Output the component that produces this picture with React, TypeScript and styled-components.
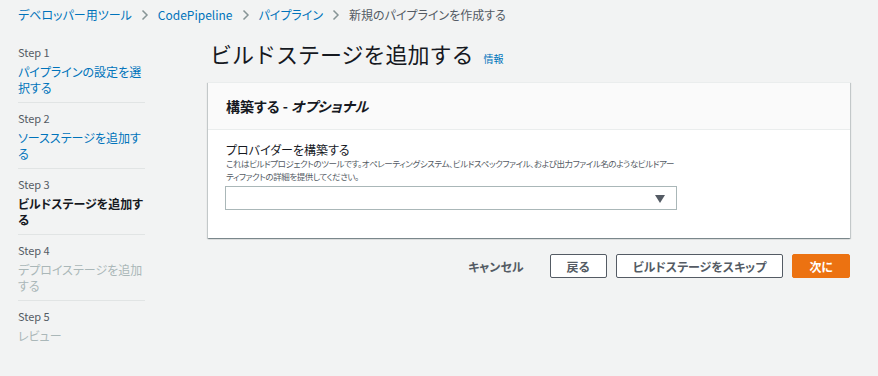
import { FC } from "react";
import styled, { createGlobalStyle } from "styled-components";

const GlobalStyle = createGlobalStyle`
  html, body {
    margin: 0;
    padding: 0;
    background: #f2f3f3;
  }
  body {
    font-family: "Noto Sans CJK JP", "Noto Sans", sans-serif;
    font-feature-settings: "palt";
    color: #16191f;
  }
`;

const Page = styled.div`
  width: 878px;
  height: 376px;
  padding: 6px 18px 0 18px;
  box-sizing: border-box;
  overflow: hidden;
`;

const Breadcrumbs = styled.nav`
  display: flex;
  align-items: center;
  gap: 9px;
  height: 18px;
  font-size: 12px;
  line-height: 18px;
`;

const Crumb = styled.span<{ $current?: boolean }>`
  color: ${(p) => (p.$current ? "#545b64" : "#0073bb")};
`;

const Sep = styled.span`
  display: flex;
  align-items: center;
`;

const Layout = styled.div`
  display: grid;
  grid-template-columns: 127px 1fr;
  column-gap: 63px;
  margin-top: 20px;
`;

const StepList = styled.ol`
  list-style: none;
  margin: 0;
  padding: 0;
`;

const StepItem = styled.li`
  padding: 7px 0 6px;
  border-bottom: 1px solid #e1e4e4;
  &:first-child {
    padding-top: 0;
  }
  &:last-child {
    border-bottom: none;
  }
`;

const StepLabel = styled.div`
  font-size: 11px;
  line-height: 16px;
  color: #545b64;
  margin-bottom: 4px;
`;

const StepName = styled.div<{ $state: "done" | "active" | "todo" }>`
  font-size: 12px;
  line-height: 16px;
  color: ${(p) =>
    p.$state === "done" ? "#0073bb" : p.$state === "active" ? "#16191f" : "#aab7b8"};
  font-weight: ${(p) => (p.$state === "active" ? 700 : 400)};
`;

const Main = styled.main`
  display: flex;
  flex-direction: column;
`;

const TitleRow = styled.div`
  display: flex;
  align-items: baseline;
  gap: 10px;
  margin-top: -6px;
  padding-left: 2px;
  margin-bottom: 14px;
`;

const Title = styled.h1`
  margin: 0;
  font-size: 22px;
  font-weight: 400;
  line-height: 30px;
  font-feature-settings: normal;
  color: #16191f;
`;

const InfoLink = styled.a`
  font-size: 10px;
  color: #0073bb;
  font-weight: 400;
  text-decoration: none;
`;

const Card = styled.section`
  background: #ffffff;
  box-shadow: 0 1px 1px 0 rgba(0, 28, 36, 0.3), 1px 1px 1px 0 rgba(0, 28, 36, 0.15),
    -1px 1px 1px 0 rgba(0, 28, 36, 0.15);
  border-top: 1px solid #eaeded;
  width: 642px;
`;

const CardHeader = styled.header`
  background: #fafafa;
  border-bottom: 1px solid #eaeded;
  height: 46px;
  display: flex;
  align-items: center;
  padding: 0 18px;
`;

const CardTitle = styled.h2`
  margin: 0;
  font-size: 14px;
  font-weight: 700;
  color: #16191f;
  em {
    font-style: italic;
  }
`;

const CardBody = styled.div`
  padding: 12px 17px 28px;
`;

const FieldLabel = styled.label`
  display: block;
  font-size: 12px;
  line-height: 15px;
  color: #16191f;
  padding-left: 1px;
`;

const FieldHint = styled.p`
  margin: 0 0 3px;
  padding-left: 1px;
  font-size: 8.5px;
  line-height: 13px;
  letter-spacing: -0.42px;
  color: #545b64;
  width: 453px;
`;

const Select = styled.div`
  position: relative;
  width: 452px;
  height: 24px;
  border: 1px solid #aab7b8;
  box-sizing: border-box;
  background: #fff;
`;

const Caret = styled.svg`
  position: absolute;
  right: 11px;
  top: 8px;
`;

const Actions = styled.div`
  display: flex;
  justify-content: flex-end;
  align-items: center;
  gap: 9px;
  width: 642px;
  margin-top: 16px;
`;

const Button = styled.button<{ $variant?: "link" | "normal" | "primary" }>`
  font-family: inherit;
  font-feature-settings: "palt";
  font-size: 12px;
  font-weight: 700;
  height: 24px;
  padding: 0 16px;
  box-sizing: border-box;
  border-radius: 2px;
  cursor: pointer;
  border: 1px solid
    ${(p) => (p.$variant === "primary" ? "#ec7211" : p.$variant === "link" ? "transparent" : "#545b64")};
  background: ${(p) =>
    p.$variant === "primary" ? "#ec7211" : p.$variant === "link" ? "transparent" : "#ffffff"};
  color: ${(p) => (p.$variant === "primary" ? "#ffffff" : "#545b64")};
`;

const Chevron: FC = () => (
  <svg width="8" height="12" viewBox="0 0 8 12">
    <path d="M1.5 1.5 L6 6 L1.5 10.5" fill="none" stroke="#879596" strokeWidth="1.5" />
  </svg>
);

const steps: { label: string; name: string; state: "done" | "active" | "todo" }[] = [
  { label: "Step 1", name: "パイプラインの設定を選択する", state: "done" },
  { label: "Step 2", name: "ソースステージを追加する", state: "done" },
  { label: "Step 3", name: "ビルドステージを追加する", state: "active" },
  { label: "Step 4", name: "デプロイステージを追加する", state: "todo" },
  { label: "Step 5", name: "レビュー", state: "todo" },
];

const App: FC = () => (
  <>
    <GlobalStyle />
    <Page>
      <Breadcrumbs>
        <Crumb>デベロッパー用ツール</Crumb>
        <Sep>
          <Chevron />
        </Sep>
        <Crumb>CodePipeline</Crumb>
        <Sep>
          <Chevron />
        </Sep>
        <Crumb>パイプライン</Crumb>
        <Sep>
          <Chevron />
        </Sep>
        <Crumb $current>新規のパイプラインを作成する</Crumb>
      </Breadcrumbs>
      <Layout>
        <StepList>
          {steps.map((s) => (
            <StepItem key={s.label}>
              <StepLabel>{s.label}</StepLabel>
              <StepName $state={s.state}>{s.name}</StepName>
            </StepItem>
          ))}
        </StepList>
        <Main>
          <TitleRow>
            <Title>ビルドステージを追加する</Title>
            <InfoLink>情報</InfoLink>
          </TitleRow>
          <Card>
            <CardHeader>
              <CardTitle>
                構築する - <em>オプショナル</em>
              </CardTitle>
            </CardHeader>
            <CardBody>
              <FieldLabel>プロバイダーを構築する</FieldLabel>
              <FieldHint>
                これはビルドプロジェクトのツールです。オペレーティングシステム、ビルドスペックファイル、および出力ファイル名のようなビルドアーティファクトの詳細を提供してください。
              </FieldHint>
              <Select>
                <Caret width="10" height="8" viewBox="0 0 10 8">
                  <path d="M0 0 H10 L5 8 Z" fill="#545b64" />
                </Caret>
              </Select>
            </CardBody>
          </Card>
          <Actions>
            <Button $variant="link">キャンセル</Button>
            <Button>戻る</Button>
            <Button>ビルドステージをスキップ</Button>
            <Button $variant="primary">次に</Button>
          </Actions>
        </Main>
      </Layout>
    </Page>
  </>
);

export default App;
